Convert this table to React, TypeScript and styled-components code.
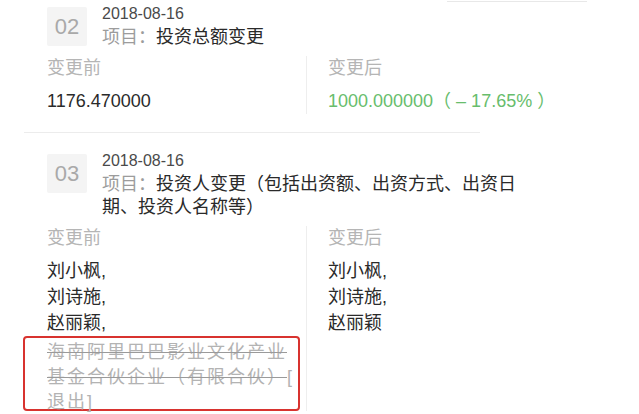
import React from 'react'
import styled, { createGlobalStyle } from 'styled-components'

const GlobalStyle = createGlobalStyle`
  html, body {
    margin: 0;
    padding: 0;
    background: #fff;
    overflow: hidden;
  }
  body {
    font-family: "Liberation Sans", "Noto Sans CJK SC", sans-serif;
    color: #333;
  }
`

const Page = styled.div`
  width: 639px;
  height: 414px;
  overflow: hidden;
`

// tail of the record above, cut off by the screenshot
const EdgeLine = styled.div`
  margin: 1px 0 0 447px;
  width: 140px;
  height: 1px;
  background: #e8e8e8;
`

const Record = styled.section<{ $top: number }>`
  padding: ${(p) => p.$top}px 0 0 47px;
`

const Header = styled.div`
  display: flex;
  align-items: flex-start;
  gap: 15px;
`

const Badge = styled.div`
  flex: none;
  width: 40px;
  height: 39px;
  margin-top: 3px;
  display: flex;
  align-items: center;
  justify-content: center;
  background: #f4f4f4;
  border-radius: 2px;
  font-size: 22px;
  color: #a9a9a9;
`

const Heading = styled.div`
  max-width: 440px;
`

const DateText = styled.div`
  font-size: 16px;
  line-height: 20px;
  color: #4a4a4a;
`

const Title = styled.div`
  margin-top: 2px;
  font-size: 18px;
  line-height: 23px;
  color: #2a2a2a;
`

const TitleKey = styled.span`
  color: #9c9c9c;
`

const Compare = styled.div`
  display: grid;
  grid-template-columns: 259px 1fr;
  margin-top: 7px;
`

const Side = styled.div<{ $after?: boolean }>`
  padding-left: ${(p) => (p.$after ? '21px' : '0')};
  border-left: ${(p) => (p.$after ? '1px solid #eeeeee' : 'none')};
`

const Label = styled.div`
  font-size: 18px;
  line-height: 24px;
  color: #b5b5b5;
`

const Values = styled.div<{ $tone?: 'plain' | 'up' }>`
  margin-top: 8px;
  font-size: 18px;
  line-height: 26px;
  color: ${(p) => (p.$tone === 'up' ? '#68bd6c' : '#2a2a2a')};
`

const Rule = styled.div`
  margin: 18px 0 0 24px;
  width: 456px;
  height: 1px;
  background: #ececec;
`

// red marker drawn over the removed shareholder
const Annotated = styled.div`
  box-sizing: border-box;
  height: 75px;
  margin: 0 6px 0 -24px;
  padding: 2px 0 0 22px;
  border: 2px solid #d8332f;
  border-radius: 4px;
`

const Removed = styled.div`
  font-size: 18px;
  line-height: 25px;
  letter-spacing: 2px;
  color: #b3b3b3;
`

const Struck = styled.span`
  text-decoration: line-through;
  text-decoration-color: #9a9a9a;
`

const App = () => {
  return (
    <Page>
      <GlobalStyle />
      <EdgeLine />

      <Record $top={2}>
        <Header>
          <Badge>02</Badge>
          <Heading>
            <DateText>2018-08-16</DateText>
            <Title>
              <TitleKey>项目：</TitleKey>投资总额变更
            </Title>
          </Heading>
        </Header>
        <Compare>
          <Side>
            <Label>变更前</Label>
            <Values>1176.470000</Values>
          </Side>
          <Side $after>
            <Label>变更后</Label>
            <Values $tone="up">1000.000000（ – 17.65% ）</Values>
          </Side>
        </Compare>
      </Record>

      <Rule />

      <Record $top={18}>
        <Header>
          <Badge>03</Badge>
          <Heading>
            <DateText>2018-08-16</DateText>
            <Title>
              <TitleKey>项目：</TitleKey>投资人变更（包括出资额、出资方式、出资日期、投资人名称等）
            </Title>
          </Heading>
        </Header>
        <Compare>
          <Side>
            <Label>变更前</Label>
            <Values>
              刘小枫,
              <br />
              刘诗施,
              <br />
              赵丽颖,
            </Values>
            <Annotated>
              <Removed>
                <Struck>海南阿里巴巴影业文化产业基金合伙企业（有限合伙）</Struck>[
                <br />
                退出]
              </Removed>
            </Annotated>
          </Side>
          <Side $after>
            <Label>变更后</Label>
            <Values>
              刘小枫,
              <br />
              刘诗施,
              <br />
              赵丽颖
            </Values>
          </Side>
        </Compare>
      </Record>
    </Page>
  )
}

export default App
